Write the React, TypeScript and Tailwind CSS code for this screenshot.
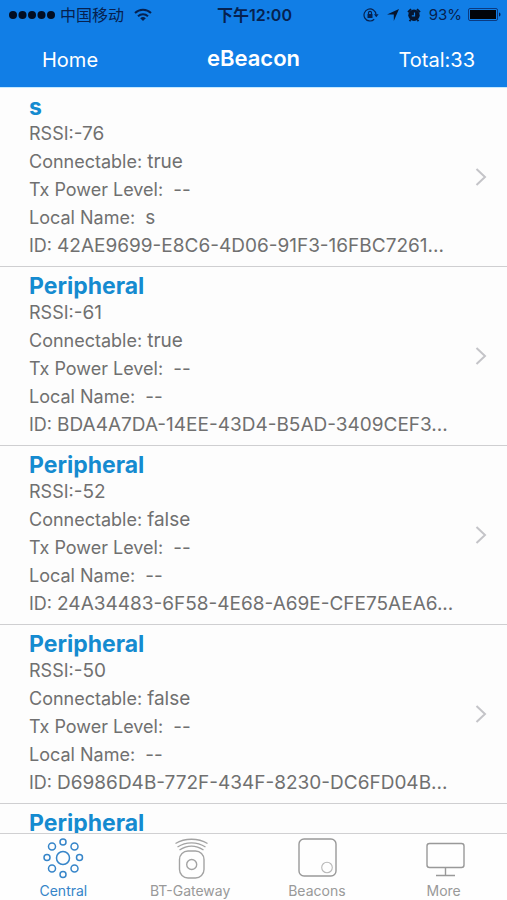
import React, { useState } from 'react';

type Device = {
  name: string;
  rssi: number;
  connectable: boolean;
  txPower: string;
  localName: string;
  id: string;
};

const devices: Device[] = [
  { name: 's', rssi: -76, connectable: true, txPower: '--', localName: 's', id: '42AE9699-E8C6-4D06-91F3-16FBC7261...' },
  { name: 'Peripheral', rssi: -61, connectable: true, txPower: '--', localName: '--', id: 'BDA4A7DA-14EE-43D4-B5AD-3409CEF3...' },
  { name: 'Peripheral', rssi: -52, connectable: false, txPower: '--', localName: '--', id: '24A34483-6F58-4E68-A69E-CFE75AEA6...' },
  { name: 'Peripheral', rssi: -50, connectable: false, txPower: '--', localName: '--', id: 'D6986D4B-772F-434F-8230-DC6FD04B...' },
];

function StatusBar() {
  return (
    <div className="grid h-[30px] grid-cols-[1fr_auto_1fr] items-center pr-1.5 pl-2 text-base text-[#06214f]">
      <div className="flex items-center gap-1">
        <svg width="48" height="12" viewBox="0 0 48 12" fill="#020d22">
          <circle cx="5" cy="6" r="4" />
          <circle cx="14.5" cy="6" r="4" />
          <circle cx="24" cy="6" r="4" />
          <circle cx="33.5" cy="6" r="4" />
          <circle cx="43" cy="6" r="4" />
        </svg>
        <span>中国移动</span>
        <svg className="ml-1.5" width="18" height="14" viewBox="0 0 18 14" fill="none" stroke="#06214f" strokeWidth="2">
          <path d="M1 5a11.5 11.5 0 0 1 16 0" />
          <path d="M4 8.2a7.2 7.2 0 0 1 10 0" />
          <path d="M9 13 6.2 10.3a4 4 0 0 1 5.6 0Z" fill="#06214f" stroke="none" />
        </svg>
      </div>
      <div className="font-semibold">下午12:00</div>
      <div className="flex items-center justify-end">
        <svg width="16" height="16" viewBox="0 0 16 16" fill="none" stroke="#06214f" strokeWidth="1.2">
          <path d="M11.2 12.3a6 6 0 1 1 1.8-4.8" />
          <path d="M11 7.3h4.6l-2.3 3Z" fill="#06214f" stroke="none" />
          <path d="M5.5 7V5.8a1.5 1.5 0 0 1 3 0V7" />
          <path d="M4.5 7h5v4h-5z" fill="#06214f" stroke="none" />
        </svg>
        <svg className="ml-2" width="12" height="12" viewBox="0 0 12 12" fill="#06152f">
          <path d="M12 0 6.8 12V5.4H0Z" />
        </svg>
        <svg className="ml-2" width="14" height="14" viewBox="0 0 14 14" fill="#06152f">
          <circle cx="7" cy="7.3" r="5.7" />
          <path d="M1 4.2 4 1.2M13 4.2 10 1.2M3.5 12l-1 1.2M10.5 12l1 1.2" stroke="#06152f" strokeWidth="1.8" />
          <path d="M7.5 4.5v3.3H4.8" fill="none" stroke="#117ee6" strokeWidth="1.2" />
        </svg>
        <span className="ml-2 text-[15px]">93%</span>
        <svg className="ml-1.5" width="33" height="14" viewBox="0 0 33 14">
          <rect x="0.5" y="0.5" width="29" height="12" rx="1.5" fill="none" stroke="#0b3a80" />
          <rect x="2" y="2" width="26" height="9" fill="#010409" />
          <path d="M31 4.5c2 .5 2 3.5 0 4Z" fill="#06214f" />
        </svg>
      </div>
    </div>
  );
}

function Field({ label, value }: { label: string; value: string | number }) {
  return (
    <p className="text-[19px] leading-7">
      <span className="text-lg leading-7">{label}</span>
      {value}
    </p>
  );
}

function DeviceName({ name }: { name: string }) {
  return <h2 className="text-[23px] leading-[26px] font-bold text-[#158bd0]">{name}</h2>;
}

function DeviceRow({ device }: { device: Device }) {
  return (
    <li className="border-b border-[#cfcfd1]">
      <a href="#device" className="flex items-center justify-between pt-1.5 pr-5 pb-1.5 pl-[29px]">
        <div className="min-w-0 whitespace-pre text-[#707070]">
          <DeviceName name={device.name} />
          <Field label="RSSI:" value={device.rssi} />
          <Field label="Connectable: " value={String(device.connectable)} />
          <Field label="Tx Power Level:  " value={device.txPower} />
          <Field label="Local Name:  " value={device.localName} />
          <Field label="ID: " value={device.id} />
        </div>
        <svg className="shrink-0" width="12" height="18" viewBox="0 0 12 18" fill="none" stroke="#c4c4c8" strokeWidth="2">
          <path d="m1.5 1 8.500 8-8.500 8" />
        </svg>
      </a>
    </li>
  );
}

function CentralIcon() {
  return (
    <svg width="44" height="42" viewBox="0 0 44 42" fill="none" stroke="#3685c9" strokeWidth="1.5">
      <circle cx="22" cy="21" r="6.5" />
      <circle cx="22" cy="5" r="3" />
      <circle cx="22" cy="37.5" r="3" />
      <circle cx="6" cy="20.5" r="3" />
      <circle cx="38.5" cy="20.5" r="3" />
      <circle cx="11" cy="9.5" r="3.5" />
      <circle cx="33.5" cy="9.5" r="3.5" />
      <circle cx="11" cy="31.5" r="3.5" />
      <circle cx="33.5" cy="31.5" r="3.5" />
    </svg>
  );
}

function GatewayIcon() {
  return (
    <svg width="44" height="42" viewBox="0 0 44 42" fill="none" stroke="#a3a3a3" strokeWidth="1.4">
      <rect x="11.5" y="14" width="24.5" height="27" rx="8.5" />
      <circle cx="23.7" cy="27.5" r="5" />
      <path d="M7.5 6.5C17 .8 30 .8 39.500 6.5M9.500 10C18 4.500 29 4.500 37.500 10M11.500 13C19 8 28 8 35.500 13" />
    </svg>
  );
}

function BeaconIcon() {
  return (
    <svg width="44" height="42" viewBox="0 0 44 42" fill="none" stroke="#999" strokeWidth="1.4">
      <rect x="4" y="2" width="37" height="37" rx="5" />
      <circle cx="32" cy="30.5" r="5.3" stroke="#b8b8b8" strokeWidth="1.1" />
    </svg>
  );
}

function MoreIcon() {
  return (
    <svg width="44" height="42" viewBox="0 0 44 42" fill="none" stroke="#999" strokeWidth="1.4">
      <rect x="5" y="6.5" width="37" height="24" rx="2.5" />
      <path d="M23.5 30.500v7.500M14 38.500h19" />
    </svg>
  );
}

const tabs = [
  { label: 'Central', Icon: CentralIcon },
  { label: 'BT-Gateway', Icon: GatewayIcon },
  { label: 'Beacons', Icon: BeaconIcon },
  { label: 'More', Icon: MoreIcon },
];

export default function App() {
  const [active, setActive] = useState('Central');

  return (
    <div className="flex h-screen flex-col bg-[#fdfdfd] font-['Inter','Noto_Sans_CJK_SC',sans-serif]">
      <header className="border-b border-[#c5e9ff] bg-[#117ee6]">
        <StatusBar />
        <div className="grid h-[57px] grid-cols-[1fr_auto_1fr] items-center px-8 text-xl text-white">
          <button className="justify-self-start pt-0.5 pl-2.5">Home</button>
          <h1 className="text-[22px] font-semibold">eBeacon</h1>
          <span className="justify-self-end pt-0.5">Total:33</span>
        </div>
      </header>
      <main className="min-h-0 flex-1 overflow-y-auto [scrollbar-width:none]">
        <ul>
          {devices.map((device) => (
            <DeviceRow key={device.id} device={device} />
          ))}
          <li className="pt-1.5 pl-[29px]">
            <DeviceName name="Peripheral" />
          </li>
        </ul>
      </main>
      <nav className="grid grid-cols-4 border-t border-[#d0d0d2] bg-[#fefefe] pt-[3px]">
        {tabs.map(({ label, Icon }) => (
          <button
            key={label}
            onClick={() => setActive(label)}
            className={`flex flex-col items-center gap-0.5 text-sm leading-[19px] ${active === label ? 'text-[#3685c9]' : 'text-[#999999]'}`}
          >
            <Icon />
            {label}
          </button>
        ))}
      </nav>
    </div>
  );
}
